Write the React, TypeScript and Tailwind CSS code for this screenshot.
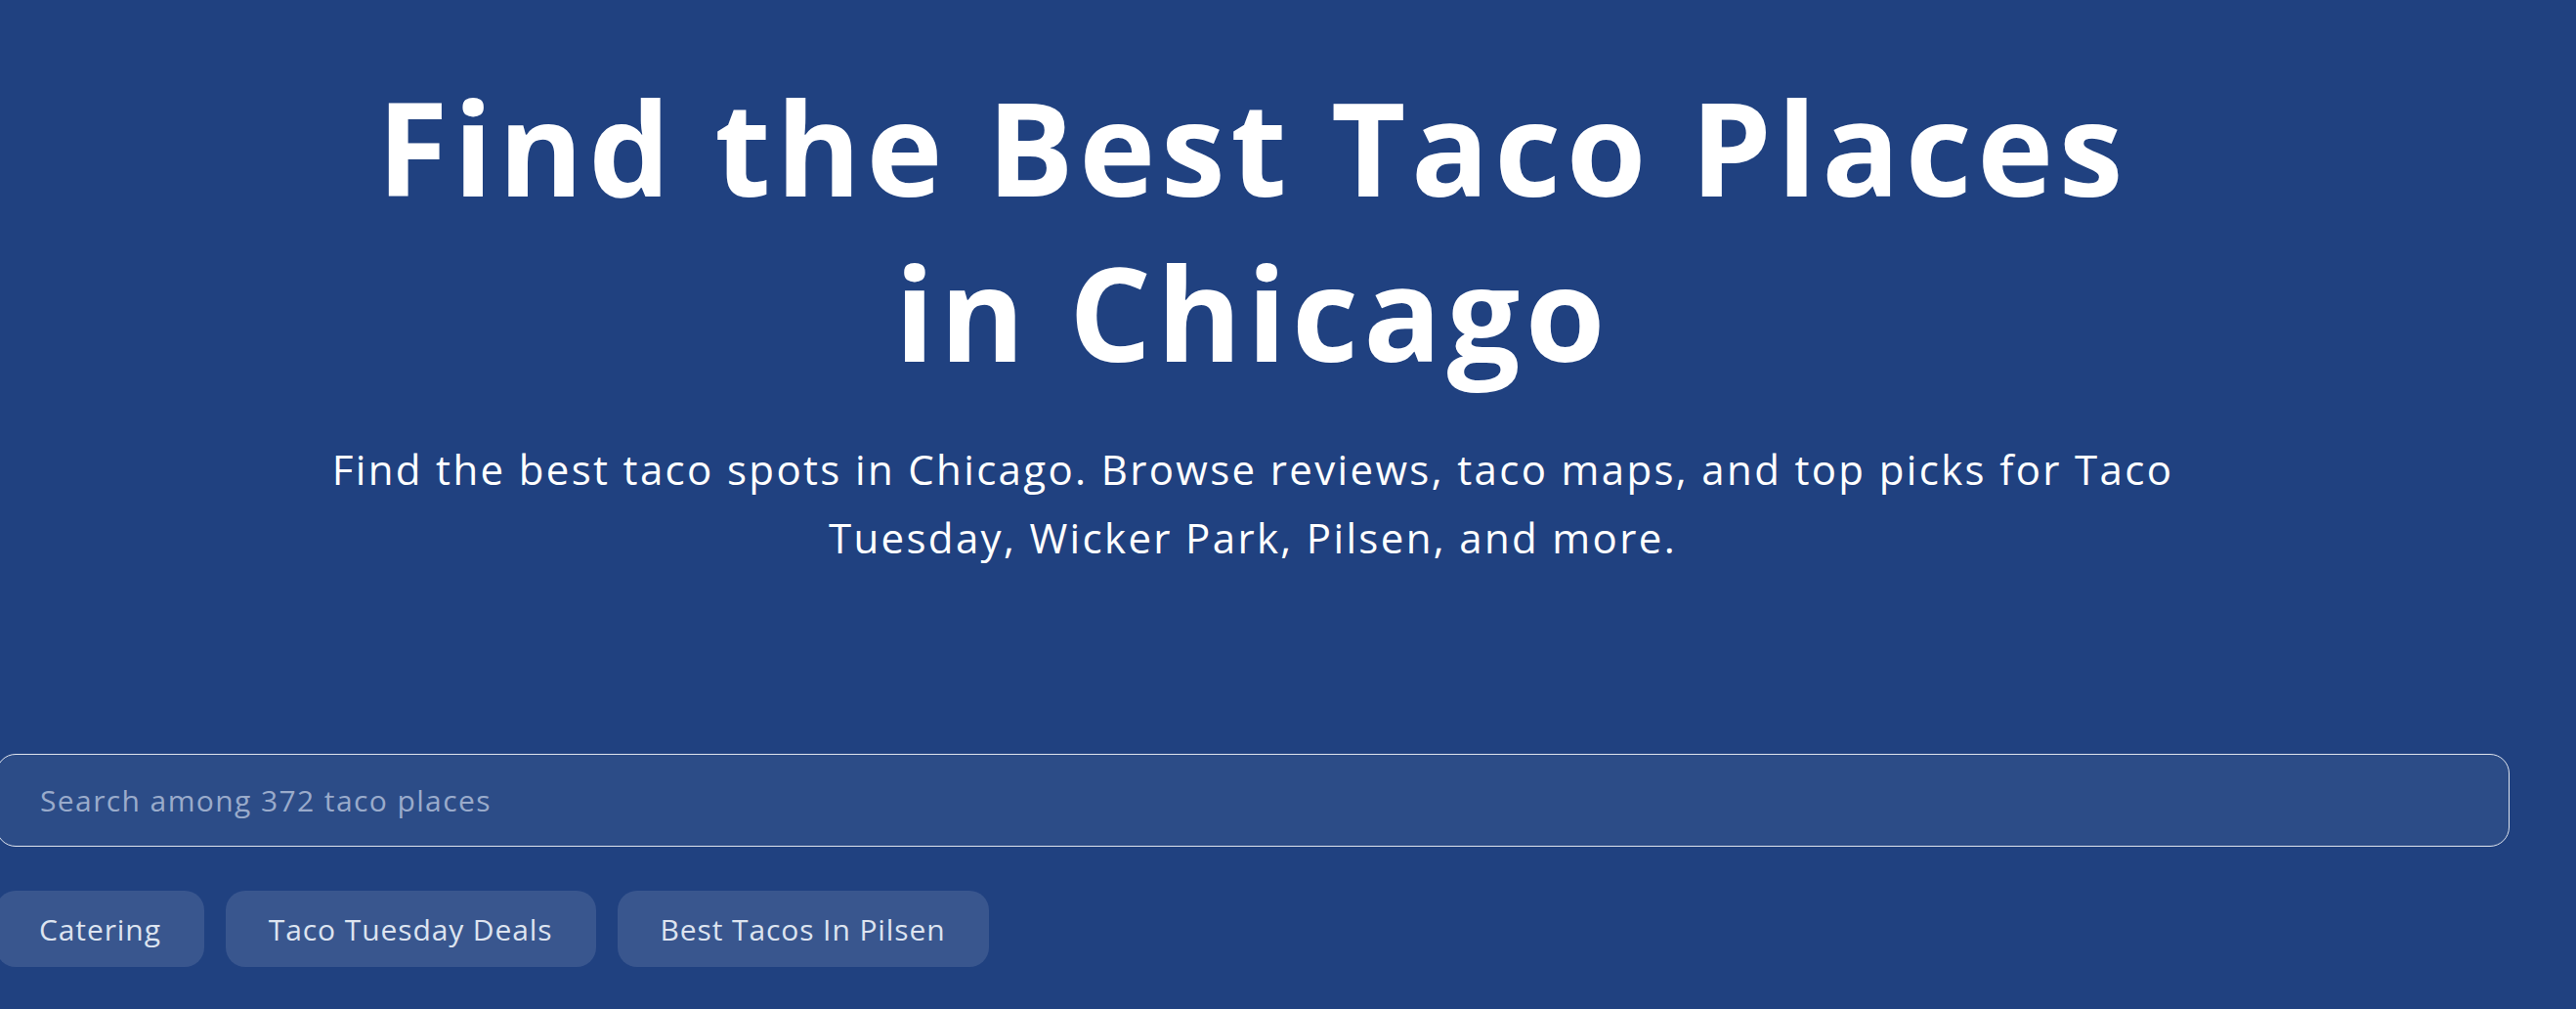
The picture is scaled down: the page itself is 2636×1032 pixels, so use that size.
import { useState } from 'react';

const quickLinks = ['Catering', 'Taco Tuesday Deals', 'Best Tacos In Pilsen'];

function App() {
  const [query, setQuery] = useState('');

  return (
    <div className="min-h-screen bg-[#204180] font-['Open_Sans',sans-serif] text-white overflow-hidden">
      <section className="ml-[-4px] w-[2572px] pt-[66px]">
        <div className="flex flex-col items-center text-center">
          <h1 className="max-w-[1870px] text-[132px] font-bold leading-[169px] tracking-[5.6px]">
            Find the Best Taco Places in Chicago
          </h1>
          <p className="mt-[41px] max-w-[1980px] text-[42px] leading-[70px] tracking-[2.35px]">
            Find the best taco spots in Chicago. Browse reviews, taco maps, and top picks for Taco
            Tuesday, Wicker Park, Pilsen, and more.
          </p>
        </div>

        <div className="mt-[186px]">
          <input
            type="text"
            value={query}
            onChange={(e) => setQuery(e.target.value)}
            placeholder="Search among 372 taco places"
            className="h-[95px] w-full rounded-[20px] border-[1.5px] border-[#dfe4ee] bg-[#2c4c87] px-[44px] text-[30px] tracking-[1.4px] text-white outline-none placeholder:text-[#9aabcb]"
          />
        </div>

        <div className="mt-[45px] flex gap-[22px]">
          {quickLinks.map((label) => (
            <button
              key={label}
              className="h-[78px] rounded-[20px] bg-[#39568e] px-[44px] text-[30px] tracking-[0.9px] text-[#dde4f0]"
            >
              {label}
            </button>
          ))}
        </div>
      </section>
    </div>
  );
}

export default App;
